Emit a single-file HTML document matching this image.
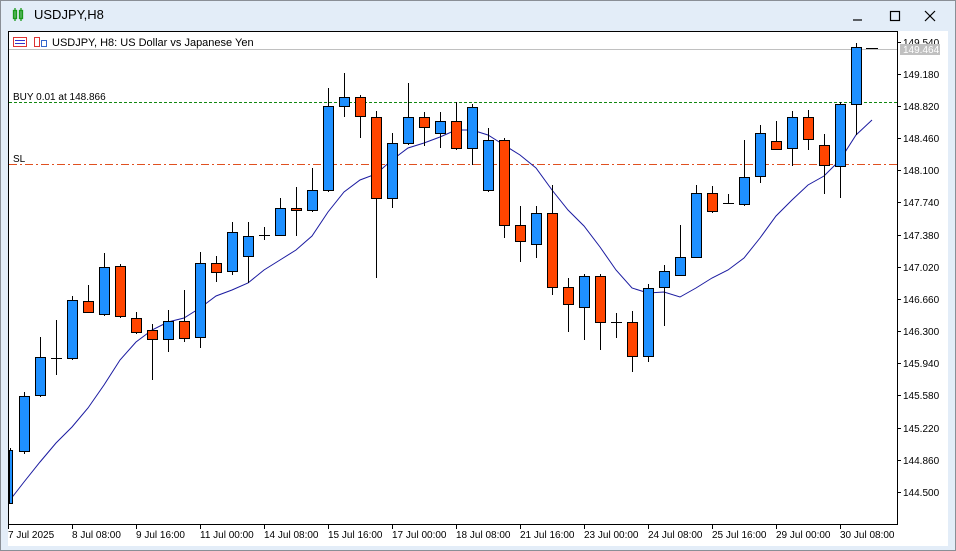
<!DOCTYPE html>
<html><head><meta charset="utf-8"><style>
body{margin:0;width:956px;height:551px;overflow:hidden;background:#dfeaf7;font-family:"Liberation Sans",sans-serif;}
.win{position:absolute;left:0;top:0;width:954px;height:549px;border:1px solid #8a8f96;background:#e3edf8;}
.title{position:absolute;left:34px;top:7px;font-size:13px;color:#000;}
svg{position:absolute;left:0;top:0}
</style></head><body>
<div class="win"></div>
<div class="title">USDJPY,H8</div>
<svg width="956" height="551" font-family="Liberation Sans, sans-serif" font-size="10">
<g stroke="#1a9a1a" stroke-width="1.3" fill="none"><rect x="13.5" y="10.5" width="3" height="8"/><line x1="15" y1="8" x2="15" y2="21"/><rect x="19.5" y="10.5" width="3" height="8"/><line x1="21" y1="8" x2="21" y2="21"/></g>
<g stroke="#000" stroke-width="1.2" fill="none"><line x1="853" y1="20" x2="862" y2="20"/><rect x="890.5" y="11.5" width="9" height="9"/><line x1="925" y1="11" x2="935" y2="21"/><line x1="935" y1="11" x2="925" y2="21"/></g>
<rect x="8" y="31" width="940" height="515" fill="#fff"/>
<rect x="8.5" y="31.5" width="889" height="493" fill="none" stroke="#000"/>
<g fill="none" stroke-width="1"><rect x="13.5" y="37.5" width="13" height="9" stroke="#d33"/><line x1="15" y1="40.5" x2="25" y2="40.5" stroke="#33c"/><line x1="15" y1="43.5" x2="25" y2="43.5" stroke="#33c"/>
<rect x="34.5" y="37.5" width="5" height="9" stroke="#d33"/><rect x="41.5" y="40.5" width="5" height="6" stroke="#36c"/></g>
<text x="52" y="46" font-size="11">USDJPY, H8:  US Dollar vs Japanese Yen</text>
<text x="13" y="100">BUY 0.01 at 148.866</text>
<text x="13" y="162">SL</text>
<line x1="9" y1="49.5" x2="897" y2="49.5" stroke="#c0c0c0"/>
<line x1="9" y1="102.5" x2="897" y2="102.5" stroke="#118811" stroke-dasharray="3,2"/>
<line x1="9" y1="164.5" x2="897" y2="164.5" stroke="#e05020" stroke-dasharray="8,3,2,3"/>
<polyline fill="none" stroke="#1a1aa0" stroke-width="1" points="10,500 24,482 40,462 56,443 72,427 88,408 104,385 120,360 136,342 152,330 168,322 184,318 200,308 216,296 232,290 248,283 264,270 280,260 296,250 312,236 328,212 344,192 360,180 376,174 392,160 408,148 424,143 440,137 456,130 472,130 488,135 504,145 520,155 536,168 552,190 568,210 584,226 600,247 616,270 632,288 648,293 664,292 680,297 696,288 712,278 728,270 744,258 760,238 776,216 792,200 808,185 824,176 840,160 856,135 872,120"/>
<g stroke="#000" stroke-width="1">
<line x1="10.5" y1="448" x2="10.5" y2="504"/>
<line x1="24.5" y1="392" x2="24.5" y2="454"/><line x1="40.5" y1="337" x2="40.5" y2="397"/><line x1="56.5" y1="320" x2="56.5" y2="375"/><line x1="72.5" y1="296" x2="72.5" y2="360"/><line x1="88.5" y1="285" x2="88.5" y2="313"/><line x1="104.5" y1="253" x2="104.5" y2="316"/><line x1="120.5" y1="264" x2="120.5" y2="318"/><line x1="136.5" y1="312" x2="136.5" y2="334"/><line x1="152.5" y1="324" x2="152.5" y2="380"/><line x1="168.5" y1="310" x2="168.5" y2="352"/><line x1="184.5" y1="290" x2="184.5" y2="342"/><line x1="200.5" y1="252" x2="200.5" y2="348"/><line x1="216.5" y1="256" x2="216.5" y2="282"/><line x1="232.5" y1="222" x2="232.5" y2="275"/><line x1="248.5" y1="222" x2="248.5" y2="283"/><line x1="264.5" y1="227" x2="264.5" y2="240"/><line x1="280.5" y1="198" x2="280.5" y2="236"/><line x1="296.5" y1="187" x2="296.5" y2="236"/><line x1="312.5" y1="168" x2="312.5" y2="212"/><line x1="328.5" y1="88" x2="328.5" y2="192"/><line x1="344.5" y1="73" x2="344.5" y2="117"/><line x1="360.5" y1="95" x2="360.5" y2="138"/><line x1="376.5" y1="111" x2="376.5" y2="278"/><line x1="392.5" y1="133" x2="392.5" y2="208"/><line x1="408.5" y1="83" x2="408.5" y2="145"/><line x1="424.5" y1="112" x2="424.5" y2="146"/><line x1="440.5" y1="112" x2="440.5" y2="148"/><line x1="456.5" y1="102" x2="456.5" y2="150"/><line x1="472.5" y1="104" x2="472.5" y2="165"/><line x1="488.5" y1="128" x2="488.5" y2="192"/><line x1="504.5" y1="138" x2="504.5" y2="238"/><line x1="520.5" y1="206" x2="520.5" y2="262"/><line x1="536.5" y1="206" x2="536.5" y2="258"/><line x1="552.5" y1="185" x2="552.5" y2="295"/><line x1="568.5" y1="278" x2="568.5" y2="332"/><line x1="584.5" y1="274" x2="584.5" y2="340"/><line x1="600.5" y1="274" x2="600.5" y2="350"/><line x1="616.5" y1="313" x2="616.5" y2="338"/><line x1="632.5" y1="311" x2="632.5" y2="372"/><line x1="648.5" y1="284" x2="648.5" y2="362"/><line x1="664.5" y1="265" x2="664.5" y2="326"/><line x1="680.5" y1="225" x2="680.5" y2="276"/><line x1="696.5" y1="185" x2="696.5" y2="258"/><line x1="712.5" y1="186" x2="712.5" y2="213"/><line x1="728.5" y1="194" x2="728.5" y2="204"/><line x1="744.5" y1="140" x2="744.5" y2="206"/><line x1="760.5" y1="125" x2="760.5" y2="183"/><line x1="776.5" y1="121" x2="776.5" y2="150"/><line x1="792.5" y1="111" x2="792.5" y2="166"/><line x1="808.5" y1="110" x2="808.5" y2="150"/><line x1="824.5" y1="134" x2="824.5" y2="194"/><line x1="840.5" y1="102" x2="840.5" y2="198"/><line x1="856.5" y1="43" x2="856.5" y2="135"/>
<line x1="866" y1="48.5" x2="878" y2="48.5"/>
<line x1="51" y1="358.5" x2="62" y2="358.5"/><line x1="259" y1="235.5" x2="270" y2="235.5"/><line x1="611" y1="322.5" x2="622" y2="322.5"/><line x1="723" y1="203.5" x2="734" y2="203.5"/>
</g>
<g stroke="#000" stroke-width="1" fill="#1e90ff">
<rect x="9.5" y="450.5" width="3" height="53"/>
<rect x="19.5" y="396.5" width="10" height="55"/><rect x="35.5" y="357.5" width="10" height="38"/><rect x="67.5" y="300.5" width="10" height="58"/><rect x="99.5" y="267.5" width="10" height="47"/><rect x="163.5" y="321.5" width="10" height="18"/><rect x="195.5" y="263.5" width="10" height="74"/><rect x="227.5" y="232.5" width="10" height="39"/><rect x="243.5" y="236.5" width="10" height="20"/><rect x="275.5" y="208.5" width="10" height="27"/><rect x="307.5" y="190.5" width="10" height="20"/><rect x="323.5" y="106.5" width="10" height="84"/><rect x="339.5" y="97.5" width="10" height="9"/><rect x="387.5" y="143.5" width="10" height="55"/><rect x="403.5" y="117.5" width="10" height="26"/><rect x="435.5" y="121.5" width="10" height="12"/><rect x="467.5" y="107.5" width="10" height="41"/><rect x="483.5" y="140.5" width="10" height="50"/><rect x="531.5" y="213.5" width="10" height="31"/><rect x="579.5" y="276.5" width="10" height="31"/><rect x="643.5" y="288.5" width="10" height="68"/><rect x="659.5" y="271.5" width="10" height="16"/><rect x="675.5" y="257.5" width="10" height="18"/><rect x="691.5" y="193.5" width="10" height="64"/><rect x="739.5" y="177.5" width="10" height="27"/><rect x="755.5" y="133.5" width="10" height="43"/><rect x="787.5" y="117.5" width="10" height="31"/><rect x="835.5" y="104.5" width="10" height="62"/><rect x="851.5" y="47.5" width="10" height="57"/>
</g>
<g stroke="#000" stroke-width="1" fill="#ff4500">
<rect x="83.5" y="301.5" width="10" height="11"/><rect x="115.5" y="266.5" width="10" height="50"/><rect x="131.5" y="318.5" width="10" height="14"/><rect x="147.5" y="330.5" width="10" height="9"/><rect x="179.5" y="321.5" width="10" height="17"/><rect x="211.5" y="263.5" width="10" height="9"/><rect x="291.5" y="208.5" width="10" height="2"/><rect x="355.5" y="97.5" width="10" height="19"/><rect x="371.5" y="117.5" width="10" height="81"/><rect x="419.5" y="117.5" width="10" height="10"/><rect x="451.5" y="121.5" width="10" height="27"/><rect x="499.5" y="140.5" width="10" height="85"/><rect x="515.5" y="225.5" width="10" height="16"/><rect x="547.5" y="213.5" width="10" height="74"/><rect x="563.5" y="287.5" width="10" height="17"/><rect x="595.5" y="276.5" width="10" height="46"/><rect x="627.5" y="322.5" width="10" height="34"/><rect x="707.5" y="193.5" width="10" height="18"/><rect x="771.5" y="141.5" width="10" height="8"/><rect x="803.5" y="117.5" width="10" height="22"/><rect x="819.5" y="145.5" width="10" height="20"/>
</g>
<g stroke="#000">
<line x1="897" y1="42.5" x2="901" y2="42.5"/><line x1="897" y1="74.5" x2="901" y2="74.5"/><line x1="897" y1="106.5" x2="901" y2="106.5"/><line x1="897" y1="138.5" x2="901" y2="138.5"/><line x1="897" y1="170.5" x2="901" y2="170.5"/><line x1="897" y1="202.5" x2="901" y2="202.5"/><line x1="897" y1="235.5" x2="901" y2="235.5"/><line x1="897" y1="267.5" x2="901" y2="267.5"/><line x1="897" y1="299.5" x2="901" y2="299.5"/><line x1="897" y1="331.5" x2="901" y2="331.5"/><line x1="897" y1="363.5" x2="901" y2="363.5"/><line x1="897" y1="395.5" x2="901" y2="395.5"/><line x1="897" y1="428.5" x2="901" y2="428.5"/><line x1="897" y1="460.5" x2="901" y2="460.5"/><line x1="897" y1="492.5" x2="901" y2="492.5"/>
<line x1="8.5" y1="524" x2="8.5" y2="529"/><line x1="72.5" y1="524" x2="72.5" y2="529"/><line x1="136.5" y1="524" x2="136.5" y2="529"/><line x1="200.5" y1="524" x2="200.5" y2="529"/><line x1="264.5" y1="524" x2="264.5" y2="529"/><line x1="328.5" y1="524" x2="328.5" y2="529"/><line x1="392.5" y1="524" x2="392.5" y2="529"/><line x1="456.5" y1="524" x2="456.5" y2="529"/><line x1="520.5" y1="524" x2="520.5" y2="529"/><line x1="584.5" y1="524" x2="584.5" y2="529"/><line x1="648.5" y1="524" x2="648.5" y2="529"/><line x1="712.5" y1="524" x2="712.5" y2="529"/><line x1="776.5" y1="524" x2="776.5" y2="529"/><line x1="840.5" y1="524" x2="840.5" y2="529"/>
</g>
<g fill="#000">
<text x="903" y="46">149.540</text><text x="903" y="78">149.180</text><text x="903" y="110">148.820</text><text x="903" y="142">148.460</text><text x="903" y="174">148.100</text><text x="903" y="206">147.740</text><text x="903" y="239">147.380</text><text x="903" y="271">147.020</text><text x="903" y="303">146.660</text><text x="903" y="335">146.300</text><text x="903" y="367">145.940</text><text x="903" y="399">145.580</text><text x="903" y="432">145.220</text><text x="903" y="464">144.860</text><text x="903" y="496">144.500</text>
<text x="8" y="538">7 Jul 2025</text><text x="72" y="538">8 Jul 08:00</text><text x="136" y="538">9 Jul 16:00</text><text x="200" y="538">11 Jul 00:00</text><text x="264" y="538">14 Jul 08:00</text><text x="328" y="538">15 Jul 16:00</text><text x="392" y="538">17 Jul 00:00</text><text x="456" y="538">18 Jul 08:00</text><text x="520" y="538">21 Jul 16:00</text><text x="584" y="538">23 Jul 00:00</text><text x="648" y="538">24 Jul 08:00</text><text x="712" y="538">25 Jul 16:00</text><text x="776" y="538">29 Jul 00:00</text><text x="840" y="538">30 Jul 08:00</text>
</g>
<rect x="900" y="44" width="40" height="11" fill="#c0c0c0"/>
<text x="903" y="53" fill="#fff">149.464</text>
</svg>
</body></html>
